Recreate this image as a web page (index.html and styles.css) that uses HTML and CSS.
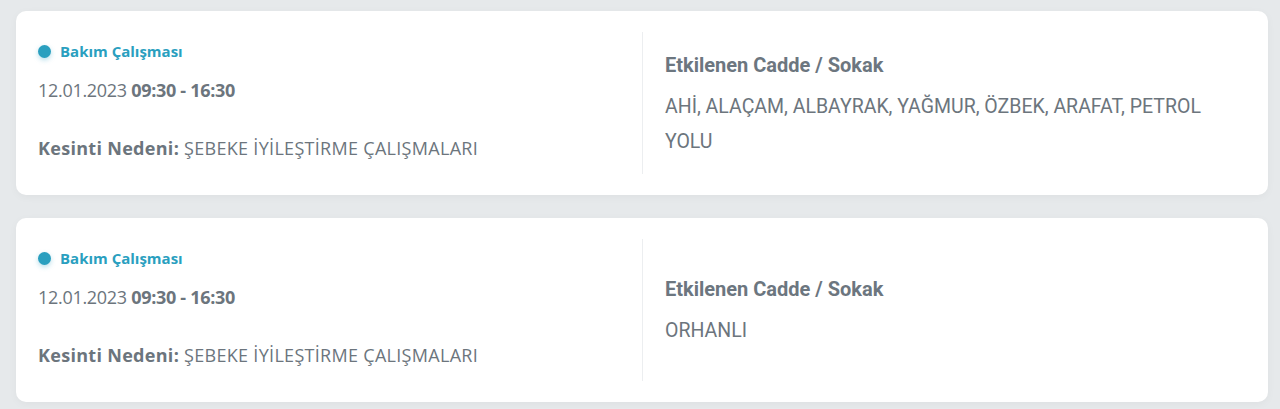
FILE: index.html
```html
<!DOCTYPE html>
<html lang="tr">
<head>
<meta charset="utf-8">
<link rel="stylesheet" href="styles.css">
</head>
<body>
<div class="list">
  <div class="card">
    <div class="left">
      <div class="type"><span class="dot"></span>Bakım Çalışması</div>
      <div class="date">12.01.2023 <b>09:30 - 16:30</b></div>
      <div class="reason"><b>Kesinti Nedeni:</b> ŞEBEKE İYİLEŞTİRME ÇALIŞMALARI</div>
    </div>
    <div class="right">
      <div class="inner">
        <div class="title">Etkilenen Cadde / Sokak</div>
        <div class="streets">AHİ, ALAÇAM, ALBAYRAK, YAĞMUR, ÖZBEK, ARAFAT, PETROL YOLU</div>
      </div>
    </div>
  </div>
  <div class="card">
    <div class="left">
      <div class="type"><span class="dot"></span>Bakım Çalışması</div>
      <div class="date">12.01.2023 <b>09:30 - 16:30</b></div>
      <div class="reason"><b>Kesinti Nedeni:</b> ŞEBEKE İYİLEŞTİRME ÇALIŞMALARI</div>
    </div>
    <div class="right">
      <div class="inner">
        <div class="title">Etkilenen Cadde / Sokak</div>
        <div class="streets">ORHANLI</div>
      </div>
    </div>
  </div>
</div>
</body>
</html>
```
FILE: styles.css
```css
html, body {
  margin: 0;
  padding: 0;
  background: #e6e9eb;
}
body {
  font-family: "Open Sans", Lato, sans-serif;
  color: #6c757d;
}
.list {
  padding: 11px 12px 6px 16px;
  display: flex;
  flex-direction: column;
  gap: 23px;
}
.card {
  background: #fff;
  border-radius: 10px;
  box-shadow: 0 2px 8px rgba(0, 0, 0, 0.04);
  padding: 21px 0;
  display: grid;
  grid-template-columns: 1fr 1fr;
  min-height: 142px;
}
.left {
  padding: 9px 22px 0 22px;
}
.type {
  display: flex;
  align-items: center;
  font-size: 15px;
  font-weight: 700;
  color: #2a9fbf;
  line-height: 20px;
}
.dot {
  width: 13px;
  height: 13px;
  border-radius: 50%;
  background: #2a9fbf;
  margin-right: 9px;
  box-shadow: 0 2px 5px rgba(42, 159, 191, 0.35);
}
.date {
  margin-top: 16px;
  font-size: 18px;
  line-height: 26px;
  letter-spacing: -0.3px;
}
.reason {
  margin-top: 32px;
  font-size: 18px;
  line-height: 26px;
  letter-spacing: 0.3px;
}
b {
  font-weight: 700;
}
.right {
  border-left: 1px solid #eceef0;
  padding: 4px 60px 0 22px;
  display: flex;
  align-items: center;
}
.title {
  font-family: Roboto, sans-serif;
  font-size: 20px;
  font-weight: 700;
  line-height: 26px;
  color: #6c767f;
}
.streets {
  font-family: Roboto, sans-serif;
  margin-top: 11px;
  font-size: 19.5px;
  line-height: 35px;
}
```
